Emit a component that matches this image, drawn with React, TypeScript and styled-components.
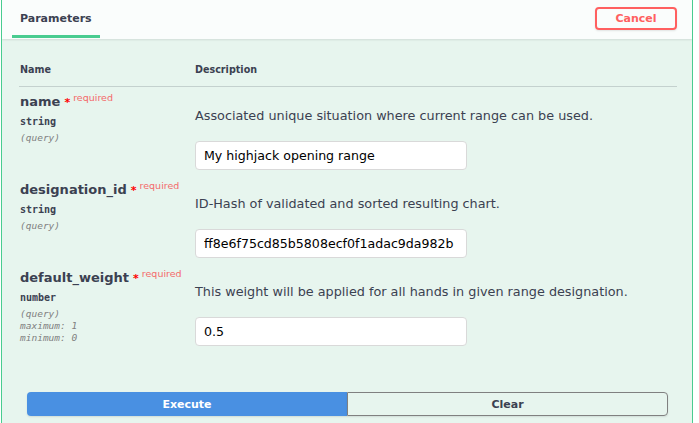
import React from "react";
import styled, { createGlobalStyle } from "styled-components";

const GlobalStyle = createGlobalStyle`
  html, body { margin: 0; padding: 0; background: #ffffff; }
  body { font-family: "DejaVu Sans", sans-serif; color: #3b4151; }
  * { box-sizing: border-box; }
`;

const Opblock = styled.div`
  margin-left: 1px;
  width: 692px;
  height: 423px;
  border-left: 1px solid #49cc90;
  border-right: 1px solid #49cc90;
  background: #e7f5ee;
  display: flex;
  flex-direction: column;
  overflow: hidden;
`;

const SectionHeader = styled.div`
  height: 39px;
  flex: none;
  display: flex;
  align-items: flex-start;
  justify-content: space-between;
  padding: 0 15px 0 10px;
  background: rgba(255, 255, 255, 0.8);
  box-shadow: 0 1px 2px rgba(0, 0, 0, 0.1);
  position: relative;
`;

const Tab = styled.div`
  height: 38px;
  width: 88px;
  padding: 2px 0 0 8px;
  border-bottom: 3px solid #49cc90;
  display: flex;
  align-items: center;
  font-size: 11px;
  font-weight: bold;
  color: #3b4151;
`;

const CancelButton = styled.button`
  margin-top: 7px;
  width: 82px;
  height: 23px;
  border: 2px solid #ff6060;
  border-radius: 4px;
  background: transparent;
  color: #ff6060;
  font-family: "DejaVu Sans", sans-serif;
  font-size: 11px;
  font-weight: bold;
  box-shadow: 0 1px 2px rgba(0, 0, 0, 0.1);
  padding: 0;
`;

const Body = styled.div`
  padding: 0 15px 0 17px;
  display: flex;
  flex-direction: column;
`;

const Grid = styled.div`
  display: grid;
  grid-template-columns: 175px 1fr;
`;

const HeadRow = styled(Grid)`
  height: 48px;
  align-items: end;
  padding: 0 0 11px 1px;
  border-bottom: 1px solid rgba(59, 65, 81, 0.2);
  font-size: 9.6px;
  font-weight: bold;
`;

const Row = styled(Grid)`
  height: 88px;
  padding-left: 1px;
`;

const NameCell = styled.div`
  padding-top: 6px;
  display: flex;
  flex-direction: column;
`;

const ParamName = styled.div`
  font-size: 13px;
  font-weight: bold;
  line-height: 18px;
  white-space: nowrap;
`;

const Star = styled.span`
  color: red;
  font-size: 11px;
  padding: 0 3px 0 4px;
`;

const Required = styled.sup`
  color: #f46a6a;
  font-size: 9.5px;
  font-weight: normal;
  vertical-align: top;
  position: relative;
  top: -4px;
`;

const ParamType = styled.div`
  margin-top: 3px;
  font-family: "DejaVu Sans Mono", monospace;
  font-size: 10px;
  font-weight: bold;
  line-height: 14px;
`;

const ParamMeta = styled.div<{ $first?: boolean }>`
  margin-top: ${(p) => (p.$first ? "3px" : "0")};
  font-family: "DejaVu Sans Mono", monospace;
  font-size: 9.5px;
  font-style: italic;
  line-height: 12px;
  color: #808080;
`;

const DescCell = styled.div`
  padding-top: 20px;
  display: flex;
  flex-direction: column;
  align-items: flex-start;
`;

const DescText = styled.div`
  font-size: 12.8px;
  line-height: 18px;
  white-space: nowrap;
`;

const Input = styled.input`
  margin-top: 16px;
  width: 272px;
  height: 29px;
  padding: 0 7px 0 8px;
  border: 1px solid #d9d9d9;
  border-radius: 4px;
  background: #ffffff;
  font-family: "DejaVu Sans", sans-serif;
  font-size: 12.6px;
  color: #000;
  outline: none;
`;

const ButtonGroup = styled.div`
  margin: 41px 9px 0 8px;
  display: grid;
  grid-template-columns: 320px 1fr;
  height: 24px;
`;

const ActionButton = styled.button<{ $primary?: boolean }>`
  height: 24px;
  padding: 0;
  font-family: "DejaVu Sans", sans-serif;
  font-size: 11px;
  font-weight: bold;
  border-radius: ${(p) => (p.$primary ? "4px 0 0 4px" : "0 4px 4px 0")};
  border: ${(p) => (p.$primary ? "none" : "1.5px solid #808080")};
  background: ${(p) => (p.$primary ? "#4990e2" : "transparent")};
  color: ${(p) => (p.$primary ? "#ffffff" : "#3b4151")};
  box-shadow: 0 1px 2px rgba(0, 0, 0, 0.1);
`;

type Param = {
  name: string;
  type: string;
  meta: string[];
  desc: string;
  value: string;
};

const params: Param[] = [
  {
    name: "name",
    type: "string",
    meta: ["(query)"],
    desc: "Associated unique situation where current range can be used.",
    value: "My highjack opening range",
  },
  {
    name: "designation_id",
    type: "string",
    meta: ["(query)"],
    desc: "ID-Hash of validated and sorted resulting chart.",
    value: "ff8e6f75cd85b5808ecf0f1adac9da982b",
  },
  {
    name: "default_weight",
    type: "number",
    meta: ["(query)", "maximum: 1", "minimum: 0"],
    desc: "This weight will be applied for all hands in given range designation.",
    value: "0.5",
  },
];

export default function App() {
  return (
    <>
      <GlobalStyle />
      <Opblock>
        <SectionHeader>
          <Tab>Parameters</Tab>
          <CancelButton>Cancel</CancelButton>
        </SectionHeader>
        <Body>
          <HeadRow>
            <div>Name</div>
            <div>Description</div>
          </HeadRow>
          {params.map((p) => (
            <Row key={p.name}>
              <NameCell>
                <ParamName>
                  {p.name}
                  <Star>*</Star>
                  <Required>required</Required>
                </ParamName>
                <ParamType>{p.type}</ParamType>
                {p.meta.map((m, i) => (
                  <ParamMeta key={m} $first={i === 0}>
                    {m}
                  </ParamMeta>
                ))}
              </NameCell>
              <DescCell>
                <DescText>{p.desc}</DescText>
                <Input defaultValue={p.value} />
              </DescCell>
            </Row>
          ))}
          <ButtonGroup>
            <ActionButton $primary>Execute</ActionButton>
            <ActionButton>Clear</ActionButton>
          </ButtonGroup>
        </Body>
      </Opblock>
    </>
  );
}
